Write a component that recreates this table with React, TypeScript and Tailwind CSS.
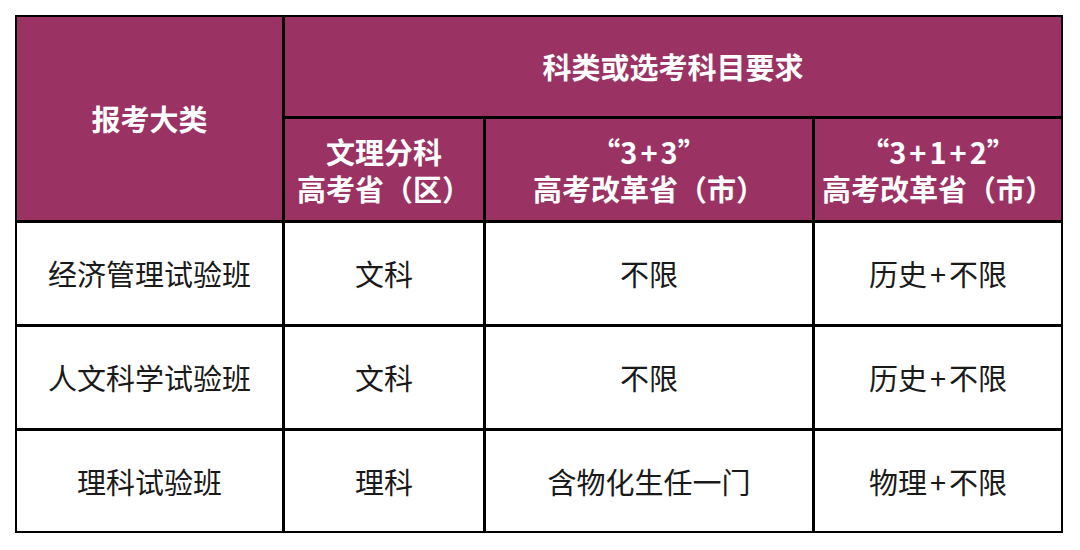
import React from "react";

const font = { fontFamily: '"Noto Sans CJK SC", "Noto Sans", sans-serif' };

function H({ children, className = "" }: { children: React.ReactNode; className?: string }) {
  return (
    <div className={`bg-[#9a3263] text-white font-bold text-[29px] leading-[37px] flex flex-col items-center justify-center text-center ${className}`}>
      {children}
    </div>
  );
}

function C({ children }: { children: React.ReactNode }) {
  return (
    <div className="bg-white text-[#1a1a1a] text-[29px] leading-[37px] flex items-center justify-center text-center">
      {children}
    </div>
  );
}

function P() {
  return <span className="mx-[3px]">+</span>;
}

const rows: React.ReactNode[][] = [
  ["经济管理试验班", "文科", "不限", <>历史<P />不限</>],
  ["人文科学试验班", "文科", "不限", <>历史<P />不限</>],
  ["理科试验班", "理科", "含物化生任一门", <>物理<P />不限</>],
];

export default function App() {
  return (
    <div className="w-[1080px] h-[550px] bg-white pt-[15px] pl-[15px]" style={font}>
      <div className="inline-grid bg-black p-[2px] gap-[3px] grid-cols-[265px_198px_326px_246px] grid-rows-[99px_101px_101px_101px_100px]">
        <H className="row-span-2">报考大类</H>
        <H className="col-span-3">科类或选考科目要求</H>
        <H>
          <span>文理分科</span>
          <span>高考省（区）</span>
        </H>
        <H>
          <span>“3<P />3”</span>
          <span>高考改革省（市）</span>
        </H>
        <H>
          <span>“3<P />1<P />2”</span>
          <span>高考改革省（市）</span>
        </H>
        {rows.map((r, i) =>
          r.map((c, j) => <C key={`${i}-${j}`}>{c}</C>)
        )}
      </div>
    </div>
  );
}
